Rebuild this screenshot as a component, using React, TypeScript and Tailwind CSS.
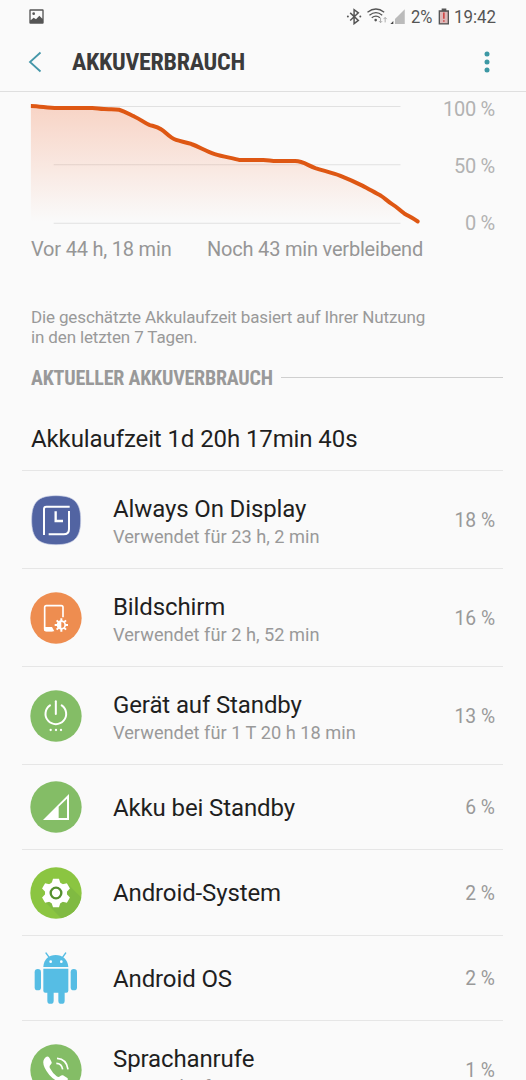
import type { ReactNode } from "react";

type Usage = {
  name: string;
  time?: string;
  percent: string;
  height: string;
  icon: ReactNode;
};

const AlwaysOnIcon = () => (
  <svg viewBox="0 0 156 156" className="h-[52px] w-[52px]">
    <path
      d="M78 5C132 5 152 24 152 78S132 152 78 152S5 132 5 78S24 5 78 5Z"
      fill="#5264a2"
      stroke="#c9cfe6"
      strokeWidth="2"
    />
    <g fill="none" stroke="#fff" strokeWidth="6">
      <path d="M42 123V45Q42 38 49 38H119" />
      <path d="M117 51V105Q117 121 101 121H56" />
      <path d="M77 52V81H99" strokeWidth="7" />
    </g>
  </svg>
);

const ScreenIcon = () => (
  <svg viewBox="0 0 156 156" className="h-[52px] w-[52px]">
    <circle cx="78" cy="78" r="77" fill="#ee8d50" />
    <path d="M99 76V46Q99 41 94 41H49Q44 41 44 46V111Q44 116 49 116H68" fill="none" stroke="#fff" strokeWidth="5" />
    <path d="M43 105H66L73 118H48Q43 118 43 113Z" fill="#fff" />
    <g transform="translate(94 99)">
      <path
        d="M0 -20V20M-20 0H20M-14 -14L14 14M14 -14L-14 14"
        stroke="#fff"
        strokeWidth="6"
      />
      <circle r="14" fill="#fff" />
      <path d="M0 -9A9 9 0 0 1 0 9Z" fill="#ee8d50" />
    </g>
  </svg>
);

const PowerIcon = () => (
  <svg viewBox="0 0 156 156" className="h-[52px] w-[52px]">
    <circle cx="78" cy="78" r="77" fill="#84bd66" />
    <g fill="none" stroke="#fff" strokeWidth="6" strokeLinecap="round">
      <path d="M60 46A31 31 0 1 0 95 46" />
      <path d="M77.500 34V72" />
    </g>
    <g fill="#fff">
      <circle cx="62" cy="120" r="3.500" />
      <circle cx="78" cy="120" r="3.500" />
      <circle cx="93" cy="120" r="3.500" />
    </g>
  </svg>
);

const SignalIcon = () => (
  <svg viewBox="0 0 156 156" className="h-[52px] w-[52px]">
    <circle cx="78" cy="78" r="77" fill="#84bd66" />
    <path d="M39 117L117 39V117Z M86 77V111H111V53Z" fill="#fff" fillRule="evenodd" />
  </svg>
);

const teeth = [0, 60, 120, 180, 240, 300];

const GearIcon = () => (
  <svg viewBox="0 0 156 156" className="h-[52px] w-[52px]">
    <defs>
      <clipPath id="gearClip">
        <circle cx="78" cy="78" r="77" />
      </clipPath>
    </defs>
    <circle cx="78" cy="78" r="77" fill="#8bc541" />
    <path d="M46 106L110 48L160 98V160H100Z" fill="#80ba42" clipPath="url(#gearClip)" />
    <g transform="translate(78 78)" fill="#fff">
      <circle r="33" />
      {teeth.map((angle) => (
        <path key={angle} d="M-14 -27L-9 -43H9L14 -27Z" transform={`rotate(${angle})`} />
      ))}
      <circle r="16" stroke="#55902f" strokeWidth="7" />
    </g>
  </svg>
);

const AndroidIcon = () => (
  <svg viewBox="0 0 156 156" className="h-[52px] w-[52px]">
    <g fill="#56bde4">
      <path d="M40 45C41 21 57 9 77 9S113 21 115 45Z" />
      <path d="M40 50H115V116Q115 122 109 122H104V146A9 9 0 0 1 85 146V122H71V146A9 9 0 0 1 52 146V122H46Q40 122 40 116Z" />
      <rect x="14" y="51" width="19" height="64" rx="9.500" />
      <rect x="122" y="51" width="19" height="64" rx="9.500" />
    </g>
    <path d="M48 3L58 17M107 3L97 17" stroke="#56bde4" strokeWidth="4" strokeLinecap="round" />
    <circle cx="62" cy="29" r="4" fill="#fff" />
    <circle cx="94" cy="29" r="4" fill="#fff" />
  </svg>
);

const CallIcon = () => (
  <svg viewBox="0 0 156 156" className="h-[52px] w-[52px]">
    <circle cx="78" cy="78" r="77" fill="#84bd66" />
    <path
      d="M43 44Q49 36 55 38Q58 39 65 55Q66 58 61 63Q57 67 60 73Q68 88 80 97Q86 101 90 97Q95 92 99 94L112 102Q116 105 110 112Q101 121 86 114Q58 100 44 71Q36 54 43 44Z"
      fill="#fff"
    />
    <g fill="none" stroke="#fff" strokeWidth="5">
      <path d="M79 58Q95 58 98 76" />
      <path d="M81 43Q110 45 114 76" />
    </g>
  </svg>
);

const items: Usage[] = [
  { name: "Always On Display", time: "Verwendet für 23 h, 2 min", percent: "18 %", height: "h-[98px]", icon: <AlwaysOnIcon /> },
  { name: "Bildschirm", time: "Verwendet für 2 h, 52 min", percent: "16 %", height: "h-[98px]", icon: <ScreenIcon /> },
  { name: "Gerät auf Standby", time: "Verwendet für 1 T 20 h 18 min", percent: "13 %", height: "h-[98px]", icon: <PowerIcon /> },
  { name: "Akku bei Standby", percent: "6 %", height: "h-[85px]", icon: <SignalIcon /> },
  { name: "Android-System", percent: "2 %", height: "h-[86px]", icon: <GearIcon /> },
  { name: "Android OS", percent: "2 %", height: "h-[85px]", icon: <AndroidIcon /> },
  { name: "Sprachanrufe", time: "Verwendet für 41 min", percent: "1 %", height: "h-[98px]", icon: <CallIcon /> },
];

const StatusBar = () => (
  <div className="flex h-8 shrink-0 items-center justify-between pr-[30px] pl-[29px] text-[#555]">
    <svg viewBox="0 0 45 45" className="h-[15px] w-[15px]">
      <path
        d="M4 1H41Q44 1 44 4V41Q44 44 41 44H4Q1 44 1 41V4Q1 1 4 1ZM5 5V34L14 26L21 31L31 20L40 29V5Z"
        fill="#555"
        fillRule="evenodd"
      />
      <circle cx="14" cy="14" r="4" fill="#555" />
    </svg>
    <div className="flex items-center">
      <svg viewBox="248 20 180 52" className="h-[17px] w-[60px]">
        <path d="M259 35L284 58L271 68V25L284 35L259 58" fill="none" stroke="#555" strokeWidth="4.500" />
        <circle cx="252" cy="46" r="3" fill="#555" />
        <circle cx="290" cy="46" r="3" fill="#555" />
        <g fill="none" stroke="#555" strokeWidth="4">
          <path d="M312 33Q338 13 363 33" />
          <path d="M318 42Q338 26 357 42" />
          <path d="M325 50Q338 40 350 50" />
        </g>
        <circle cx="337" cy="57" r="4" fill="#555" />
        <g fill="none" stroke="#aaa" strokeWidth="3">
          <path d="M352 50V65M347 60L352 65L357 60" />
          <path d="M366 64V49M361 54L366 49L371 54" />
        </g>
        <path d="M382 69L391 60V69Z" fill="#444" />
        <path d="M396 69V54L426 24V69Z" fill="#bbb" />
      </svg>
      <span className="ml-[5px] w-[22px] origin-left scale-x-[.87] text-[19px] leading-none">2%</span>
      <svg viewBox="524 20 36 50" className="ml-[5px] h-[17px] w-[12px]">
        <path d="M535 21H549V26H557V69H526V26H535Z" fill="#555" />
        <path d="M530 31H553V65H530Z" fill="#dcb8b8" />
        <path d="M541.500 33V52M541.500 56V61" stroke="#d04848" strokeWidth="5" />
      </svg>
      <span className="ml-[4px] w-[42px] origin-left scale-x-[.89] text-[19px] leading-none">19:42</span>
    </div>
  </div>
);

const Header = () => (
  <header className="flex h-[60px] shrink-0 items-center border-b border-[#dfdfdf] pr-[36px] pl-[28px]">
    <svg viewBox="0 0 14 22" className="h-[22px] w-[14px]">
      <path d="M12.500 1.500L2 11L12.500 20.500" fill="none" stroke="#4597a9" strokeWidth="1.800" />
    </svg>
    <h1 className="ml-[30px] flex-1 font-['Roboto_Condensed',Roboto,sans-serif] text-[24px] leading-none font-bold tracking-[-0.28px] text-[#3b3b3b]">
      AKKUVERBRAUCH
    </h1>
    <svg viewBox="0 0 6 22" className="h-[22px] w-[6px]" fill="#3c98a4">
      <circle cx="3" cy="3" r="2.500" />
      <circle cx="3" cy="11" r="2.500" />
      <circle cx="3" cy="19" r="2.500" />
    </svg>
  </header>
);

const curve =
  "M92 48C120 49 145 54 170 54H275C290 54 295 57 310 57C330 58 340 56 355 59C375 65 390 75 400 79C420 88 428 97 445 104C458 108 468 109 480 117C495 126 505 142 525 149C540 154 555 155 570 161C595 170 612 182 640 191C665 199 695 203 715 209H785C800 209 808 212 825 212H880C905 213 915 224 940 233C965 241 990 246 1015 256C1040 266 1060 275 1080 285C1100 295 1120 308 1135 315C1148 323 1155 332 1170 341C1185 350 1192 359 1205 368C1220 377 1233 383 1245 392";

const Chart = () => (
  <section className="flex h-[140px] shrink-0 justify-between pr-[31px]">
    <svg viewBox="0 6 1252 417.400" className="h-[140px] w-[420px] shrink-0">
      <defs>
        <linearGradient id="fade" x1="0" y1="48" x2="0" y2="392" gradientUnits="userSpaceOnUse">
          <stop offset="0" stopColor="#f05a1e" stopOpacity=".24" />
          <stop offset="1" stopColor="#f05a1e" stopOpacity="0" />
        </linearGradient>
        <clipPath id="plot">
          <rect x="92" y="6" width="1168" height="420" />
        </clipPath>
      </defs>
      <path d="M92 49H1194M160 223H1194M160 397H1194" stroke="#e1e1e1" strokeWidth="3" />
      <path d={`${curve}H92Z`} fill="url(#fade)" />
      <path d={curve} fill="none" stroke="#de5713" strokeWidth="12" strokeLinecap="round" clipPath="url(#plot)" />
    </svg>
    <div className="-mb-px flex flex-col items-end justify-between pt-[7px] text-[20px] leading-[20px] tracking-[-0.25px] text-[#b2b2b2]">
      <span>100 %</span>
      <span>50 %</span>
      <span>0 %</span>
    </div>
  </section>
);

const Row = ({ item }: { item: Usage }) => (
  <li className={`flex shrink-0 items-center border-t border-[#e6e6e6] pr-2 pl-2 ${item.height}`}>
    {item.icon}
    <div className="ml-[31px] flex-1 whitespace-nowrap">
      <p className={`text-[24px] leading-[28px] tracking-[-0.12px] text-[#1f1f1f] ${item.time ? "mt-[5px]" : "mt-px"}`}>
        {item.name}
      </p>
      {item.time && <p className="text-[18.2px] leading-[27px] tracking-[0.02px] text-[#999]">{item.time}</p>}
    </div>
    <span className="mt-[3px] text-[19.300px] text-[#999]">{item.percent}</span>
  </li>
);

export default function App() {
  return (
    <div className="flex h-[1080px] w-[526px] flex-col overflow-hidden bg-[#fafafa] font-[Roboto,sans-serif]">
      <StatusBar />
      <Header />
      <Chart />
      <div className="flex h-[75px] shrink-0 pt-[5px] pl-[31px] text-[20px] leading-[24px] tracking-[-0.2px] whitespace-nowrap text-[#969696]">
        <span className="w-[176px]">Vor 44 h, 18 min</span>
        <span>Noch 43 min verbleibend</span>
      </div>
      <p className="h-[60px] w-[440px] shrink-0 pl-[31px] text-[17px] leading-[20px] tracking-[-0.14px] text-[#999]">
        Die geschätzte Akkulaufzeit basiert auf Ihrer Nutzung
        <br />
        in den letzten 7 Tagen.
      </p>
      <div className="flex h-[22px] shrink-0 items-center pr-[23px] pl-[31px]">
        <h2 className="font-['Roboto_Condensed',Roboto,sans-serif] text-[20px] leading-none font-bold tracking-[-0.22px] text-[#999]">
          AKTUELLER AKKUVERBRAUCH
        </h2>
        <div className="-mt-[2px] ml-2 h-px flex-1 bg-[#cfcfcf]" />
      </div>
      <p className="h-[81px] shrink-0 pt-[36px] pl-[31px] text-[24px] leading-[28px] tracking-[-0.1px] text-[#1f1f1f]">
        Akkulaufzeit 1d 20h 17min 40s
      </p>
      <ul className="mr-[23px] ml-[22px] flex flex-col">
        {items.map((item) => (
          <Row key={item.name} item={item} />
        ))}
      </ul>
    </div>
  );
}
